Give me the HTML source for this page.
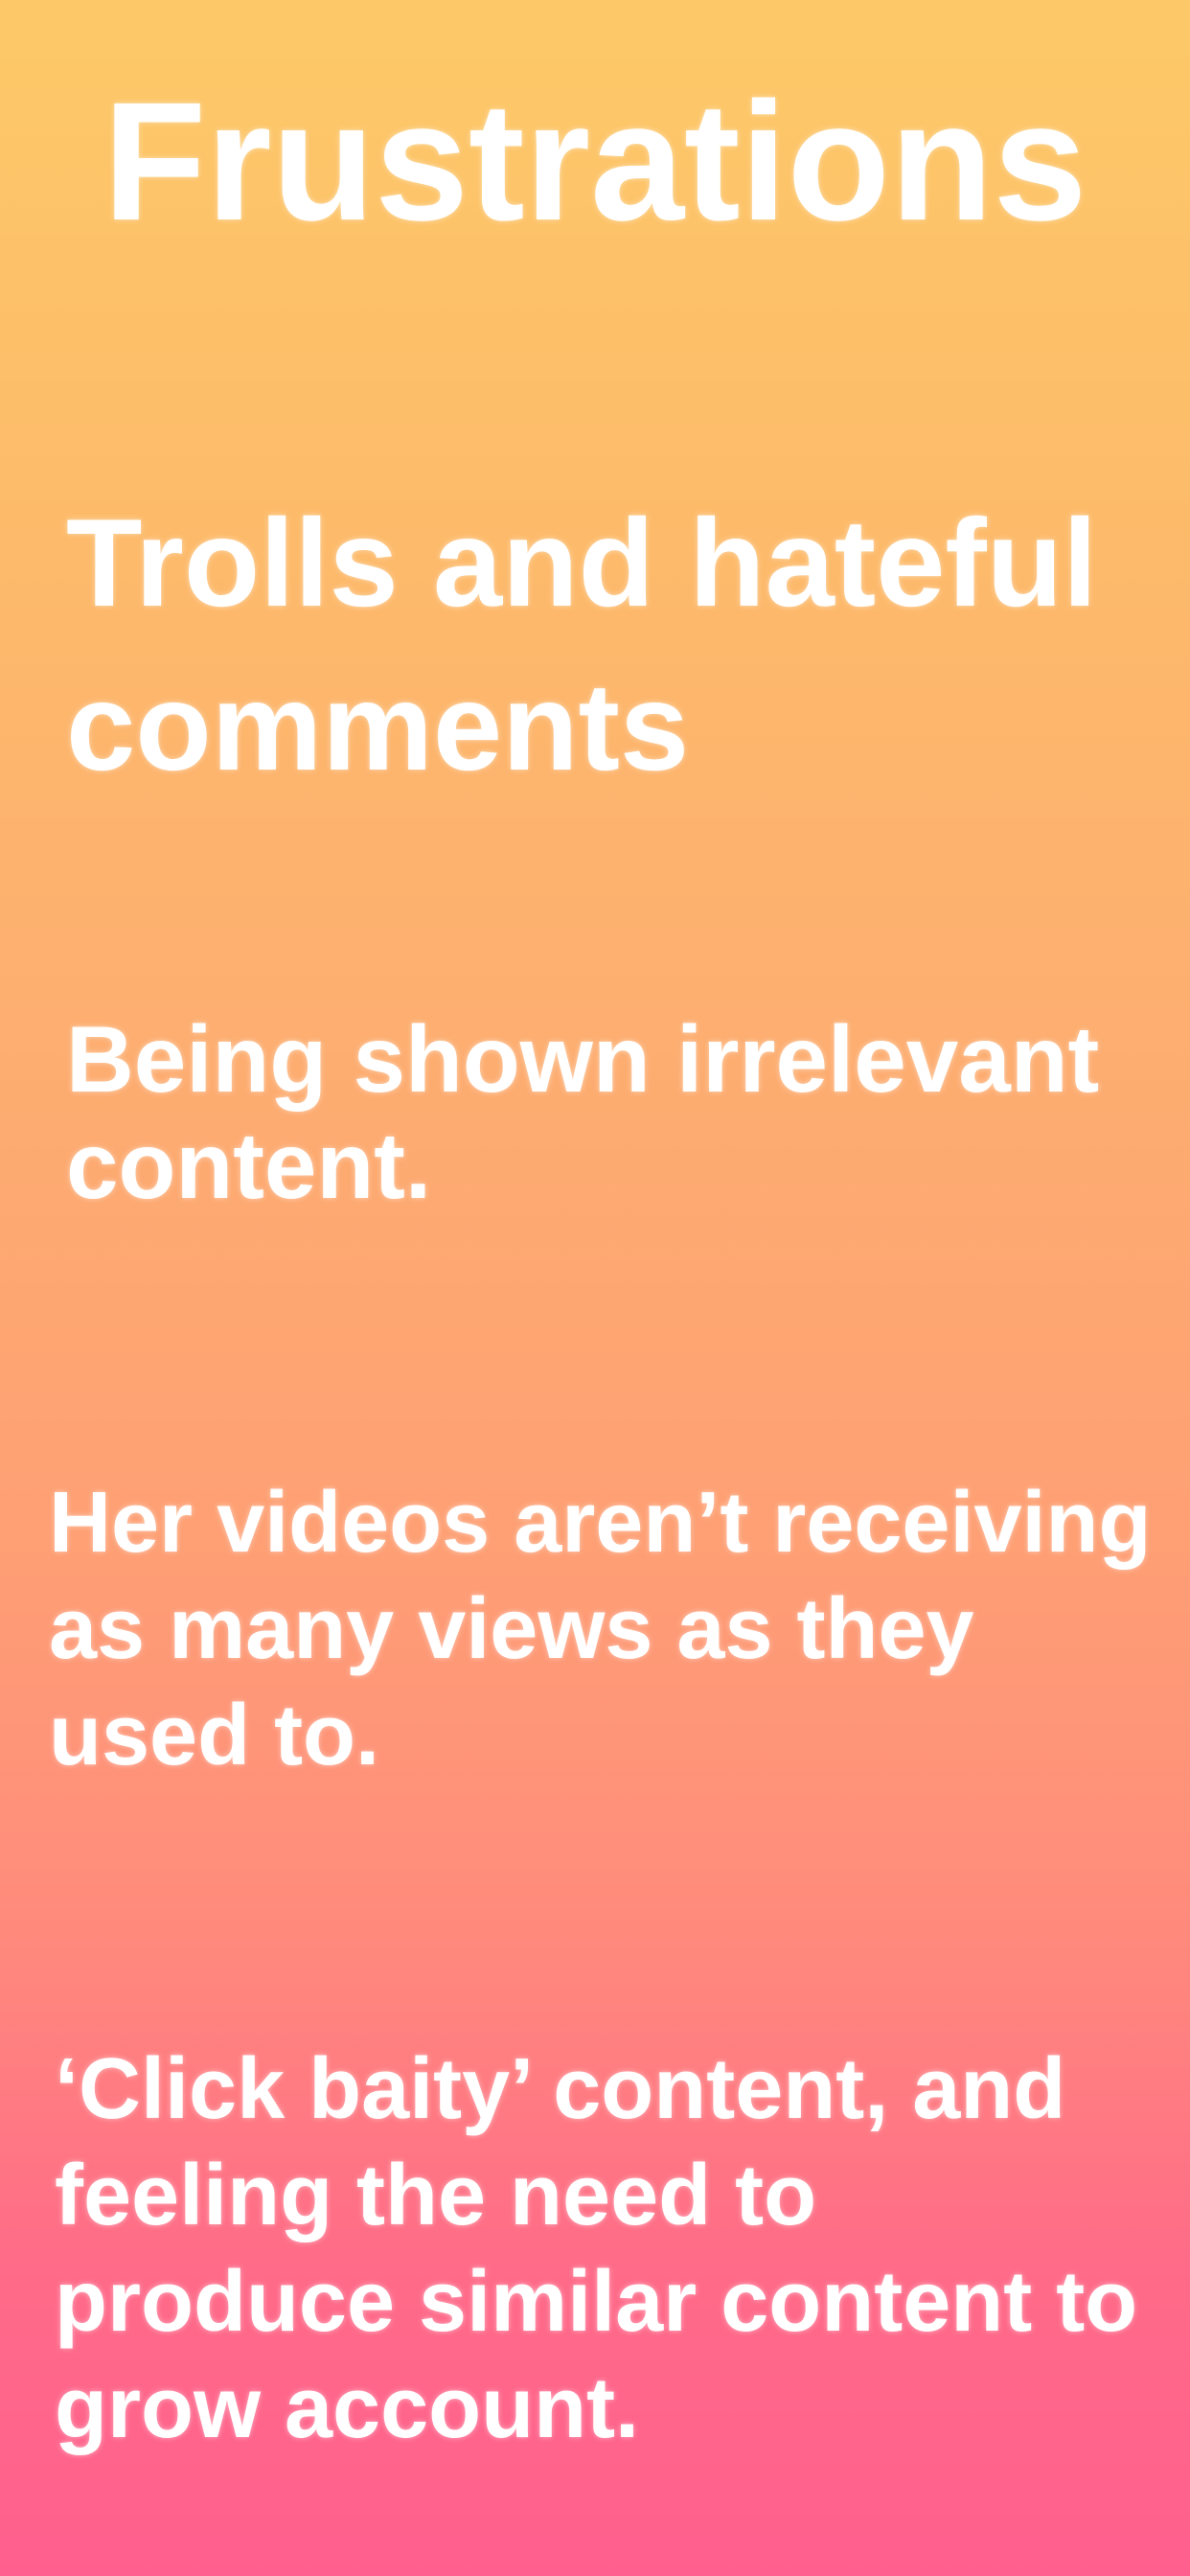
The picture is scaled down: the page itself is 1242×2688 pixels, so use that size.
<!DOCTYPE html>
<html><head><meta charset="utf-8"><style>
html,body{margin:0;padding:0}
body{width:1242px;height:2688px;position:relative;overflow:hidden;
background:linear-gradient(180deg,#fdc968 0%,#fdbb6a 20%,#fdae70 40%,#fe9f74 60%,#ff8a7c 75%,#ff6b88 88%,#ff5f8e 100%);
font-family:"Liberation Sans",sans-serif;font-weight:bold;color:#fff}
div{position:absolute;white-space:nowrap;text-shadow:0 0 6px rgba(255,255,255,0.5)}
</style></head><body>
<div style="top:81px;left:0;width:1242px;text-align:center;font-size:176px;line-height:176px">Frustrations</div>
<div style="top:502px;left:69px;font-size:130px;line-height:171px">Trolls and hateful<br>comments</div>
<div style="top:1050px;left:69px;font-size:98px;line-height:111px">Being shown irrelevant<br>content.</div>
<div style="top:1534px;left:51px;font-size:90px;line-height:111px">Her videos aren’t receiving<br>as many views as they<br>used to.</div>
<div style="top:2125px;left:57px;font-size:90px;line-height:111px">‘Click baity’ content, and<br>feeling the need to<br>produce similar content to<br>grow account.</div>
</body></html>
